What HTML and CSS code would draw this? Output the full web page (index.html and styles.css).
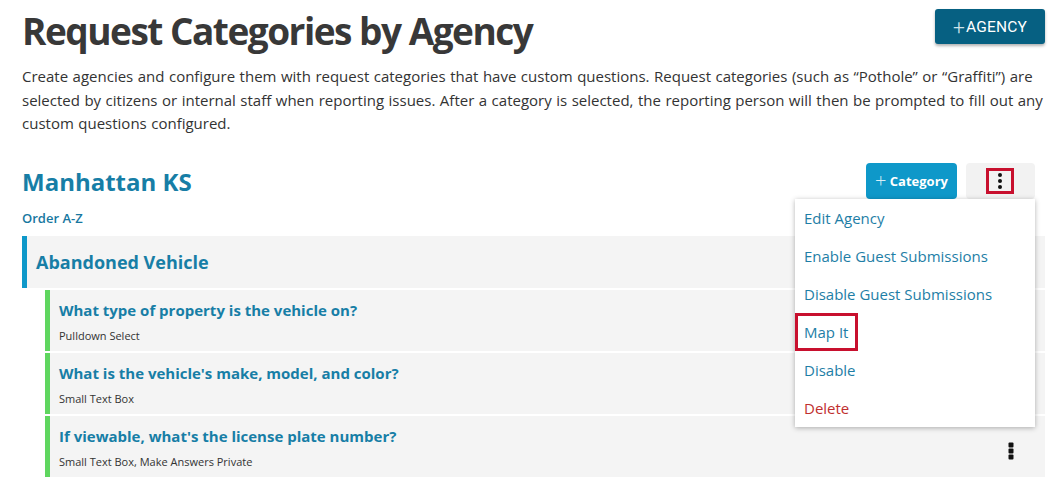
FILE: index.html
```html
<!DOCTYPE html>
<html>
<head>
<meta charset="utf-8">
<link rel="stylesheet" href="styles.css">
</head>
<body>
<div class="page">
  <header class="top">
    <h1 class="title">Request Categories by Agency</h1>
    <button class="btn-agency"><span class="plus">+</span>AGENCY</button>
  </header>
  <p class="desc">Create agencies and configure them with request categories that have custom questions. Request categories (such as “Pothole” or “Graffiti”) are selected by citizens or internal staff when reporting issues. After a category is selected, the reporting person will then be prompted to fill out any custom questions configured.</p>

  <section class="agency">
    <div class="agency-head">
      <div class="agency-left">
        <h2 class="agency-name">Manhattan KS</h2>
        <a class="order">Order A-Z</a>
      </div>
      <div class="agency-actions">
        <button class="btn-category"><span class="thin">+</span> Category</button>
        <div class="kebab-wrap">
          <button class="btn-kebab"><span class="hl-box"><svg width="6" height="18" viewBox="0 0 6 18"><circle cx="3" cy="3" r="2"/><circle cx="3" cy="9" r="2"/><circle cx="3" cy="15" r="2"/></svg></span></button>
          <ul class="menu">
            <li>Edit Agency</li>
            <li>Enable Guest Submissions</li>
            <li>Disable Guest Submissions</li>
            <li><span class="hl-item">Map It</span></li>
            <li>Disable</li>
            <li class="danger">Delete</li>
          </ul>
        </div>
      </div>
    </div>

    <div class="category">Abandoned Vehicle</div>
    <div class="questions">
      <div class="question">
        <div class="q-text">
          <div class="q-title">What type of property is the vehicle on?</div>
          <div class="q-sub">Pulldown Select</div>
        </div>
      </div>
      <div class="question">
        <div class="q-text">
          <div class="q-title">What is the vehicle's make, model, and color?</div>
          <div class="q-sub">Small Text Box</div>
        </div>
      </div>
      <div class="question">
        <div class="q-text">
          <div class="q-title">If viewable, what's the license plate number?</div>
          <div class="q-sub">Small Text Box, Make Answers Private</div>
        </div>
        <span class="q-kebab"><svg width="6" height="18" viewBox="0 0 6 18"><rect x="0.5" y="0.5" width="5" height="5" rx="1"/><rect x="0.5" y="6.5" width="5" height="5" rx="1"/><rect x="0.5" y="12.5" width="5" height="5" rx="1"/></svg></span>
      </div>
    </div>
  </section>
</div>
</body>
</html>
```

FILE: styles.css
```css
* { box-sizing: border-box; }
body {
  margin: 0;
  font-family: "Open Sans", "Noto Sans", sans-serif;
  color: #333;
  background: #fff;
  overflow: hidden;
}
.page {
  padding: 9px 10px 0 22px;
}
.top {
  display: flex;
  justify-content: space-between;
  align-items: flex-start;
}
.title {
  margin: 0;
  font-size: 37px;
  font-weight: 700;
  line-height: 44px;
  color: #383838;
  letter-spacing: -1.5px;
}
.btn-agency {
  height: 35px;
  width: 110px;
  border: 0;
  border-radius: 3px;
  background: #066082;
  color: #fff;
  font-family: Roboto, sans-serif;
  font-size: 15.5px;
  letter-spacing: 0.2px;
  box-shadow: 0 2px 3px rgba(0,0,0,0.3);
  display: flex;
  align-items: center;
  justify-content: center;
  padding: 0;
}
.btn-agency .plus {
  font-weight: 300;
  font-size: 21px;
  color: #cfe3ea;
  margin-right: 1px;
}
.desc {
  margin: 12px 0 0;
  font-size: 15px;
  line-height: 23.5px;
  word-spacing: 0.6px;
  color: #333;
}
.agency {
  margin-top: 29px;
}
.agency-head {
  display: flex;
  justify-content: space-between;
  align-items: flex-start;
}
.agency-name {
  margin: 0;
  font-size: 24px;
  line-height: 34px;
  font-weight: 700;
  color: #177ea6;
}
.order {
  display: block;
  margin-top: 10px;
  font-size: 13px;
  line-height: 18px;
  font-weight: 600;
  color: #1777a0;
}
.agency-actions {
  display: flex;
  gap: 9px;
  margin-right: 10px;
  margin-top: -2px;
}
.btn-category {
  height: 36px;
  width: 91px;
  border: 0;
  border-radius: 4px;
  background: #0e98c9;
  color: #fff;
  font-family: "Open Sans", sans-serif;
  font-weight: 700;
  font-size: 13px;
  padding: 0;
}
.btn-category .thin {
  font-weight: 300;
  font-size: 20px;
  vertical-align: -2px;
  color: #d8eef7;
}
.kebab-wrap {
  position: relative;
}
.btn-kebab {
  height: 36px;
  width: 69px;
  border: 0;
  border-radius: 4px;
  background: #f2f2f2;
  display: flex;
  align-items: center;
  justify-content: center;
  padding: 0;
}
.hl-box {
  width: 28px;
  height: 26px;
  border: 3px solid #c8102e;
  display: flex;
  align-items: center;
  justify-content: center;
  margin-right: 1px;
}
.hl-box svg { fill: #111; }
.menu {
  position: absolute;
  top: 36px;
  right: 0;
  width: 240px;
  margin: 0;
  padding: 0;
  list-style: none;
  background: #fff;
  box-shadow: 0 1px 5px rgba(0,0,0,0.3);
  z-index: 5;
}
.menu li {
  height: 38px;
  display: flex;
  align-items: center;
  padding-left: 9px;
  font-size: 15px;
  color: #1e7ea6;
}
.menu li.danger { color: #bf2f2f; }
.hl-item {
  border: 3px solid #c8102e;
  margin-left: -9px;
  height: 38px;
  padding: 0 7px 0 6px;
  display: flex;
  align-items: center;
}
.category {
  margin-top: 9px;
  height: 52px;
  background: #f4f4f4;
  border-left: 5px solid #0e98c9;
  display: flex;
  align-items: center;
  padding-left: 9px;
  font-size: 18px;
  font-weight: 700;
  color: #177ea6;
}
.questions {
  margin-left: 23px;
  margin-top: 2px;
  display: flex;
  flex-direction: column;
  gap: 2px;
}
.question {
  height: 61px;
  background: #f4f4f4;
  border-left: 5px solid #5fd65f;
  display: flex;
  justify-content: space-between;
  align-items: flex-start;
  padding: 10px 31px 0 9px;
}
.q-title {
  font-size: 15px;
  font-weight: 700;
  color: #177ea6;
  line-height: 20px;
}
.q-sub {
  margin-top: 8px;
  font-size: 11px;
  line-height: 15px;
  color: #333;
}
.q-kebab { align-self: center; }
.q-kebab svg { fill: #111; display: block; }
```
